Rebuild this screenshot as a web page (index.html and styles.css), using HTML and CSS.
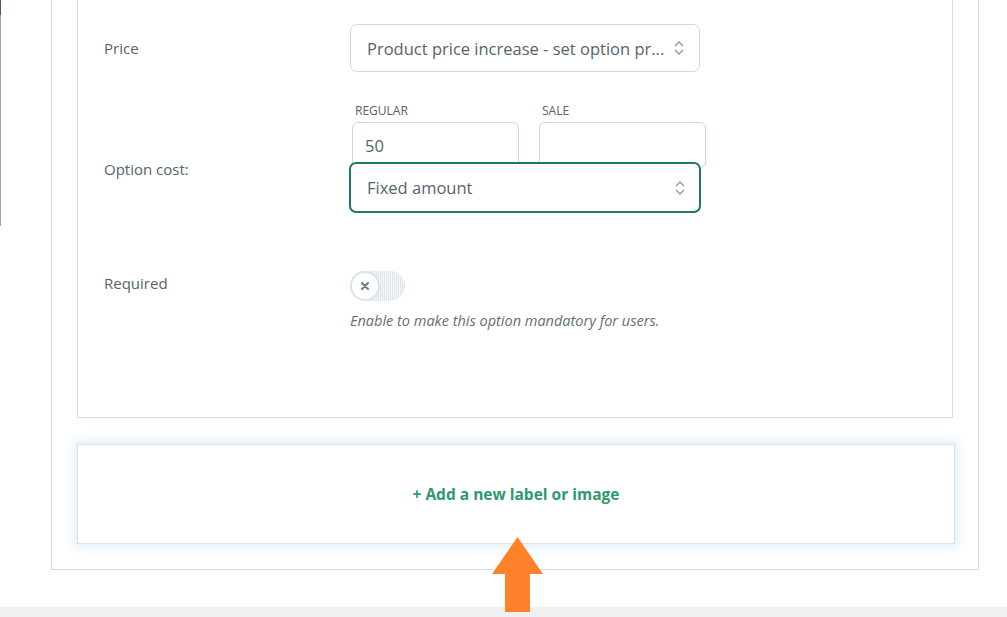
FILE: index.html
```html
<!DOCTYPE html>
<html lang="en">
<head>
    <meta charset="UTF-8">
    <meta name="viewport" content="width=device-width, initial-scale=1.0">
    <title>Option settings</title>
    <link rel="stylesheet" href="styles.css">
</head>
<body>
    <div class="page">
        <div class="window-edge"></div>

        <div class="panel">
            <div class="option-card">

                <div class="row row-price">
                    <div class="row-label">Price</div>
                    <div class="row-field">
                        <div class="select select-price">
                            <span class="select-text">Product price increase - set option pr...</span>
                            <svg class="chevrons" width="12" height="18" viewBox="0 0 12 18">
                                <path d="M2 7 L6 3 L10 7" fill="none" stroke="#8b9ba5" stroke-width="1.3"/>
                                <path d="M2 11 L6 15 L10 11" fill="none" stroke="#8b9ba5" stroke-width="1.3"/>
                            </svg>
                        </div>
                    </div>
                </div>

                <div class="row row-cost">
                    <div class="row-label">Option cost:</div>
                    <div class="row-field">
                        <div class="cost-inputs">
                            <div class="cost-group">
                                <label class="cost-caption" for="regular">Regular</label>
                                <input class="cost-input" type="text" id="regular" value="50">
                            </div>
                            <div class="cost-group">
                                <label class="cost-caption" for="sale">Sale</label>
                                <input class="cost-input" type="text" id="sale" value="">
                            </div>
                        </div>
                        <div class="select select-type">
                            <span class="select-text">Fixed amount</span>
                            <svg class="chevrons" width="12" height="18" viewBox="0 0 12 18">
                                <path d="M2 7 L6 3 L10 7" fill="none" stroke="#8b9ba5" stroke-width="1.3"/>
                                <path d="M2 11 L6 15 L10 11" fill="none" stroke="#8b9ba5" stroke-width="1.3"/>
                            </svg>
                        </div>
                    </div>
                </div>

                <div class="row row-required">
                    <div class="row-label">Required</div>
                    <div class="row-field">
                        <div class="toggle">
                            <span class="toggle-knob">
                                <svg width="10" height="10" viewBox="0 0 10 10">
                                    <path d="M2 2 L8 8 M8 2 L2 8" stroke="#6d7d86" stroke-width="2.2" stroke-linecap="round"/>
                                </svg>
                            </span>
                        </div>
                        <p class="help-text">Enable to make this option mandatory for users.</p>
                    </div>
                </div>

            </div>

            <div class="add-card">
                <a class="add-link" href="#">+ Add a new label or image</a>
            </div>
        </div>

        <div class="footer-strip"></div>

        <!-- flèche d'annotation -->
        <svg class="arrow" width="52" height="76" viewBox="0 0 52 76">
            <path d="M25.5 0 L51 37 L38 37 L38 75 L13 75 L13 37 L0 37 Z" fill="#ff822a"/>
        </svg>
    </div>
</body>
</html>
```

FILE: styles.css
```css
body {
    margin: 0;
    background: #fff;
    font-family: "Open Sans", "Noto Sans", Arial, sans-serif;
    color: #55636e;
    overflow: hidden;
}
.page {
    position: relative;
    height: 617px;
    display: flex;
    flex-direction: column;
}
.window-edge {
    position: absolute;
    left: 0;
    top: 0;
    width: 1px;
    height: 226px;
    background: linear-gradient(#3e5870 0, #3e5870 15px, #a3a3a3 15px);
}
.panel {
    margin-left: 51px;
    padding: 0 25px 25px 25px;
    border: 1px solid #dcdcde;
    border-top: none;
    box-sizing: border-box;
    width: 928px;
}
.option-card {
    border: 1px solid #dcdcde;
    border-top: none;
    height: 418px;
    box-sizing: border-box;
    width: 876px;
    padding: 24px 0 0 26px;
}
.row {
    display: flex;
}
.row-label {
    width: 246px;
    flex-shrink: 0;
    font-size: 15px;
    line-height: 20px;
}
.row-price .row-label {
    padding-top: 14px;
}
.select {
    display: flex;
    align-items: center;
    justify-content: space-between;
    box-sizing: border-box;
    background: #fff;
    border-radius: 7px;
    font-size: 16.5px;
    color: #55636e;
}
.select-price {
    width: 350px;
    height: 48px;
    border: 1px solid #cdd8de;
    padding: 0 14px 0 16px;
}
.select-text {
    white-space: nowrap;
}
.chevrons {
    flex-shrink: 0;
}
.row-cost {
    margin-top: 32px;
}
.row-cost .row-label {
    padding-top: 55px;
}
.cost-inputs {
    display: flex;
    gap: 20px;
    padding-left: 2px;
}
.cost-group {
    display: flex;
    flex-direction: column;
}
.cost-caption {
    font-size: 12px;
    line-height: 14px;
    text-transform: uppercase;
    color: #55636e;
    padding-left: 3px;
    margin-bottom: 4px;
}
.cost-input {
    width: 167px;
    height: 46px;
    box-sizing: border-box;
    border: 1px solid #cdd8de;
    border-radius: 6px;
    padding: 0 12px;
    font-family: inherit;
    font-size: 16.5px;
    color: #55636e;
    outline: none;
}
.select-type {
    position: relative;
    margin-top: -6px;
    margin-left: -1px;
    width: 352px;
    height: 51px;
    border: 2px solid #1d7a68;
    padding: 0 13px 0 16px;
}
.row-required {
    margin-top: 58px;
}
.row-required .row-label {
    padding-top: 2px;
}
.toggle {
    width: 55px;
    height: 30px;
    border-radius: 15px;
    box-sizing: border-box;
    background: repeating-linear-gradient(90deg, #dfe6ea 0, #dfe6ea 1px, #f3f6f7 1px, #f3f6f7 2px);
    display: flex;
    align-items: center;
}
.toggle-knob {
    width: 30px;
    height: 30px;
    border-radius: 50%;
    background: #fff;
    border: 2px solid #dde4e7;
    box-sizing: border-box;
    display: flex;
    align-items: center;
    justify-content: center;
}
.help-text {
    margin: 10px 0 0 0;
    font-size: 14.5px;
    line-height: 20px;
    font-style: italic;
    color: #646f78;
}
.add-card {
    margin-top: 26px;
    width: 878px;
    height: 100px;
    box-sizing: border-box;
    border: 1px solid #d9e1e8;
    box-shadow: 0 0 10px 3px rgba(160, 205, 240, 0.35);
    display: flex;
    align-items: center;
    justify-content: center;
}
.add-link {
    font-size: 15.5px;
    font-weight: bold;
    color: #2c9a6d;
    text-decoration: none;
}
.footer-strip {
    position: absolute;
    left: 0;
    right: 0;
    top: 607px;
    height: 10px;
    background: #f0f0f1;
}
.arrow {
    position: absolute;
    left: 492px;
    top: 537px;
}
```
